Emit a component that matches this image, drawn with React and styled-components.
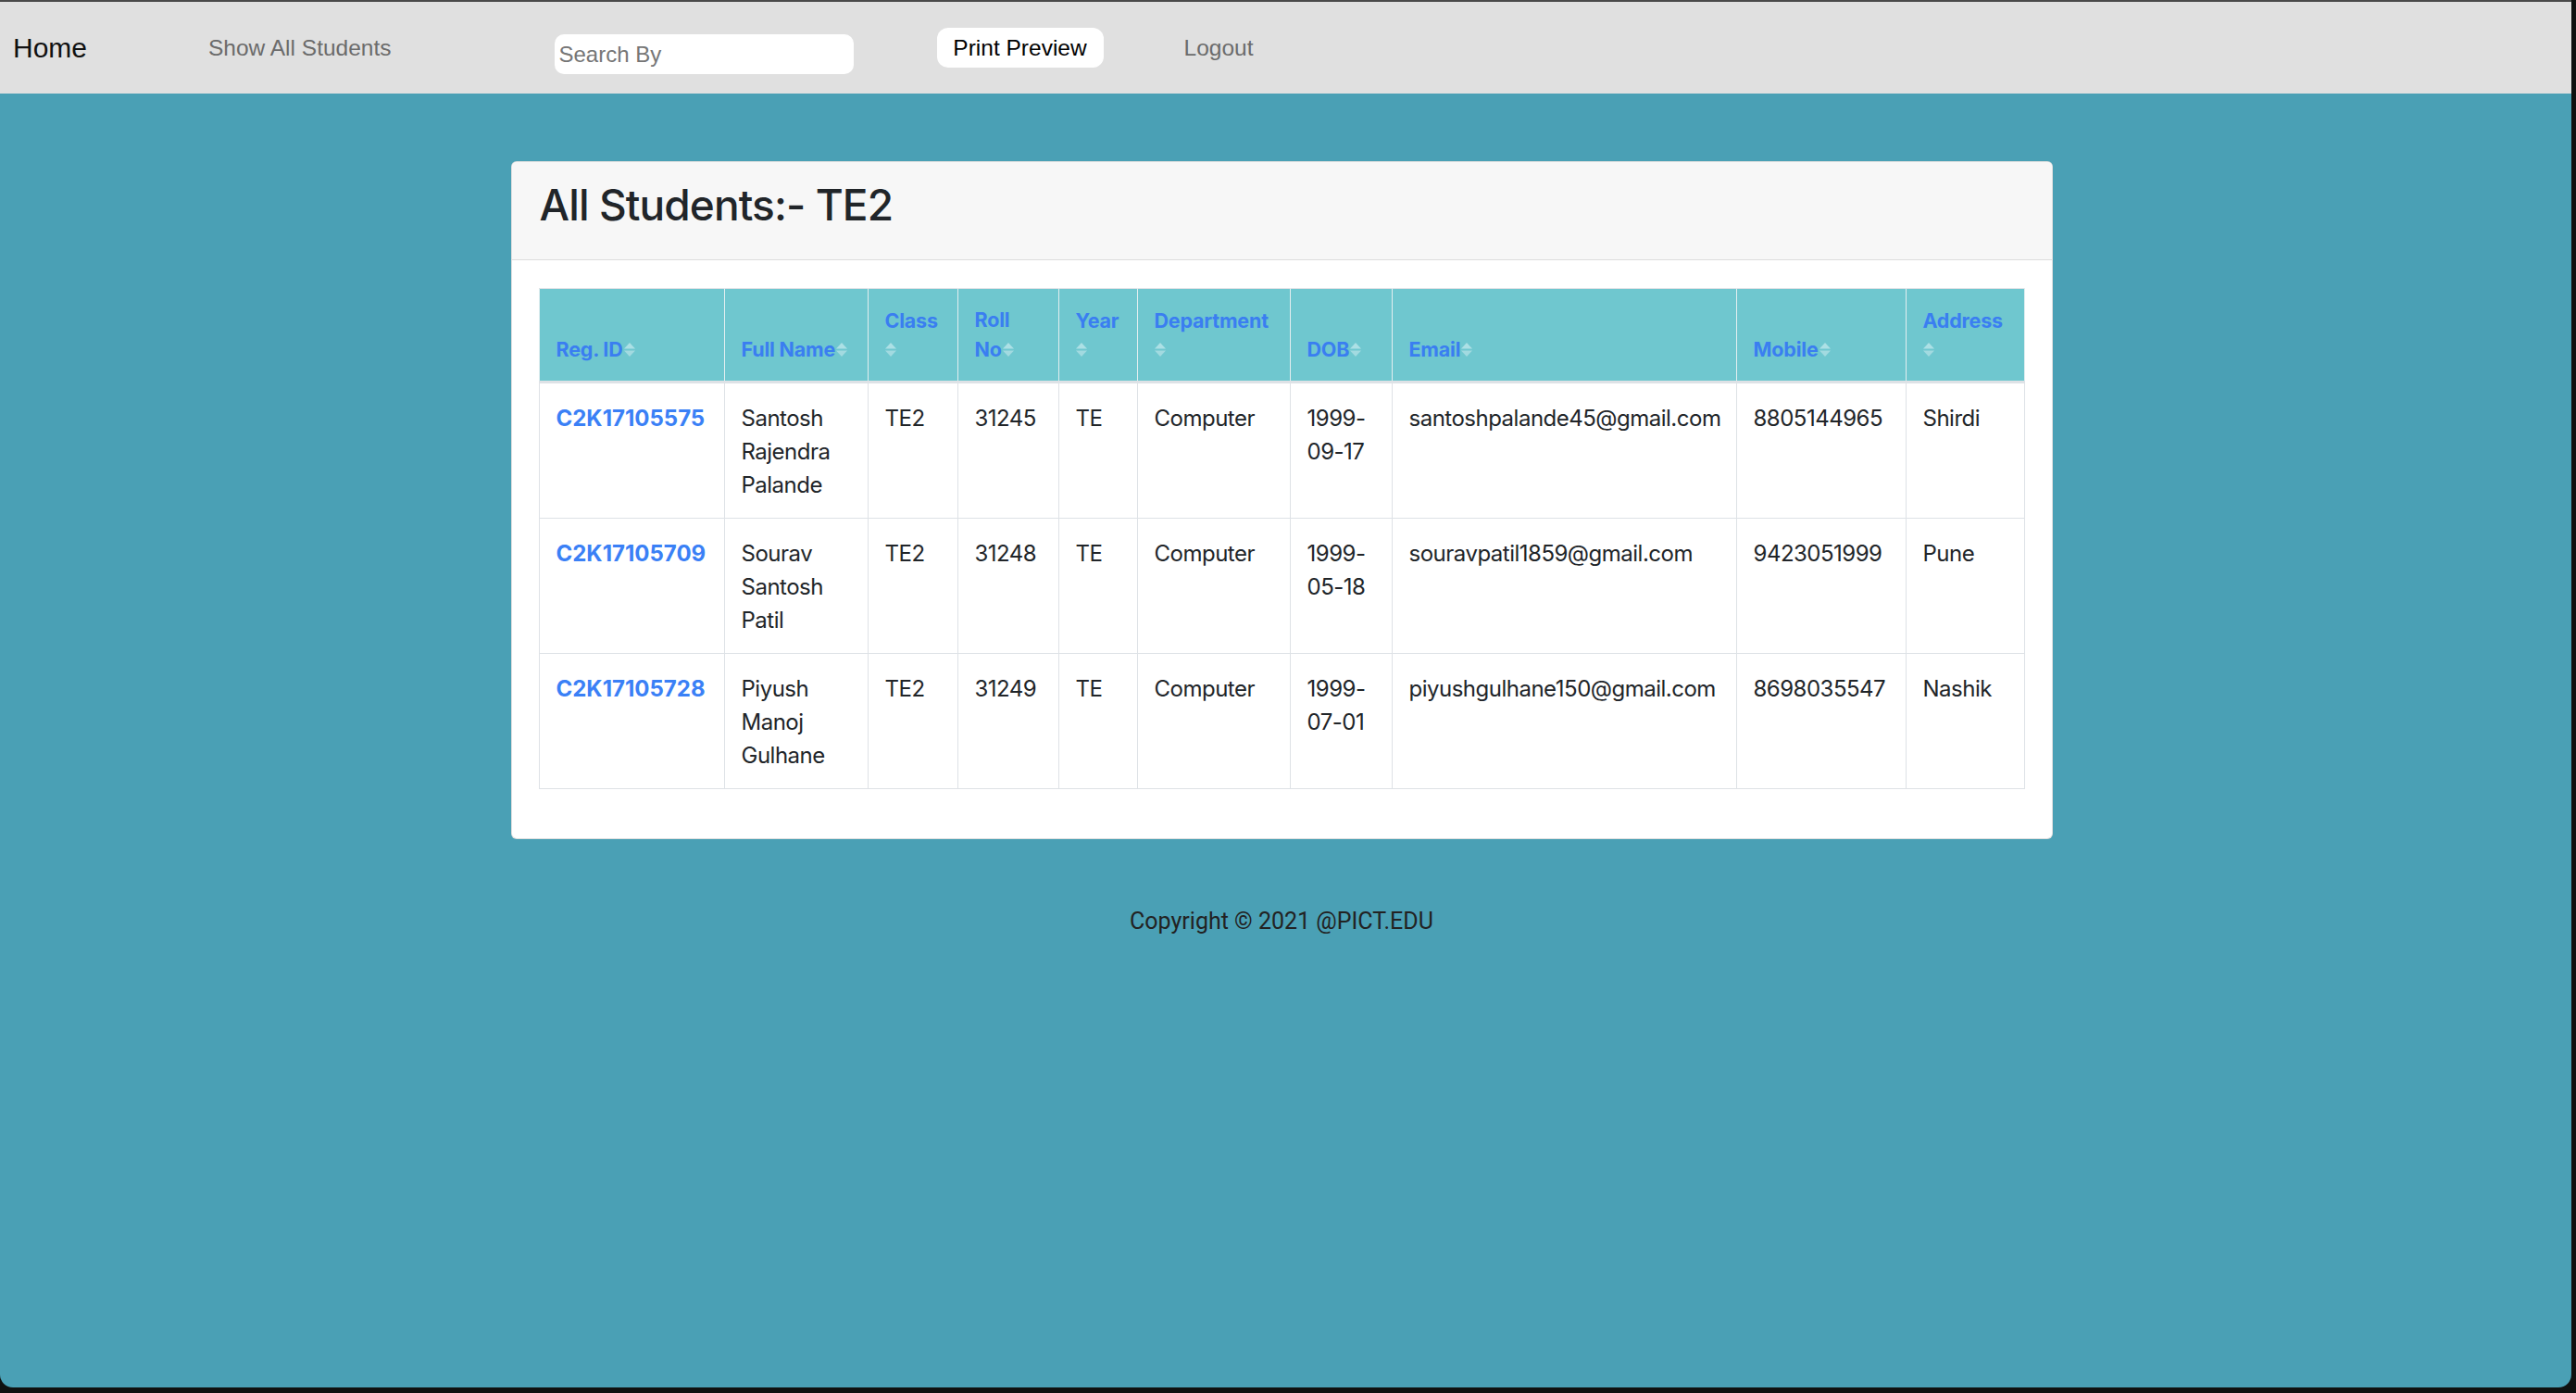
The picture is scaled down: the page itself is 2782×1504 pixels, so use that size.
import React from 'react';
import styled, { createGlobalStyle } from 'styled-components';

const GlobalStyle = createGlobalStyle`
  html, body {
    margin: 0;
    padding: 0;
    background: #0f1110;
  }
  * {
    box-sizing: border-box;
  }
`;

const Frame = styled.div`
  width: 2777px;
  height: 1498px;
  border-top: 2px solid #4a4a4a;
  border-bottom-left-radius: 14px;
  border-bottom-right-radius: 14px;
  background: #4aa0b5;
  overflow: hidden;
  display: flex;
  flex-direction: column;
`;

const NavBar = styled.nav`
  height: 99px;
  background: #e0e0e0;
  display: flex;
  align-items: center;
  padding-left: 14px;
  font-family: "Liberation Sans", Arial, sans-serif;
`;

const Brand = styled.a`
  font-size: 30px;
  color: #111;
  text-decoration: none;
`;

const NavLink = styled.a`
  font-size: 24.5px;
  color: #6b6b6b;
  text-decoration: none;
  margin-left: ${p => p.gap}px;
`;

const SearchInput = styled.input`
  margin-left: 176px;
  margin-top: 14px;
  width: 323px;
  height: 43px;
  border: none;
  border-radius: 10px;
  background: #fff;
  padding: 0 5px;
  font-family: "Liberation Sans", Arial, sans-serif;
  font-size: 24px;
  color: #222;
  outline: none;
  &::placeholder {
    color: #767676;
  }
`;

const PreviewButton = styled.button`
  margin-left: 90px;
  width: 180px;
  height: 43px;
  border: none;
  border-radius: 12px;
  background: #fff;
  font-family: "Liberation Sans", Arial, sans-serif;
  font-size: 24.5px;
  color: #000;
  padding: 0;
`;

const Main = styled.main`
  width: 2768px;
  padding-top: 73px;
  font-family: Inter, "Noto Sans", sans-serif;
  color: #212529;
`;

const Container = styled.div`
  width: 1665px;
  margin: 0 auto;
`;

const Card = styled.section`
  background: #fff;
  border: 1px solid rgba(0, 0, 0, 0.125);
  border-radius: 6px;
  overflow: hidden;
`;

const CardHeader = styled.header`
  background: #f7f7f7;
  border-bottom: 1px solid #dcdcdc;
  padding: 18px 30px;
`;

const Title = styled.h2`
  margin: 0 0 12px;
  font-size: 46px;
  font-weight: 500;
  line-height: 57px;
  letter-spacing: -0.9px;
  color: #212529;
`;

const CardBody = styled.div`
  padding: 30px 29px 53px;
`;

const Table = styled.table`
  width: 100%;
  border-collapse: collapse;
  table-layout: fixed;
  font-size: 24px;
  line-height: 36px;
  letter-spacing: -0.5px;
`;

const HeadCell = styled.th`
  background: #6fc7cf;
  color: #3a7ef1;
  font-size: 21.5px;
  font-weight: 700;
  line-height: 31.5px;
  letter-spacing: -0.2px;
  text-align: left;
  vertical-align: bottom;
  padding: 18px 17px 18px 18px;
  border: 1px solid #e3eef0;
  border-bottom: 3px solid #dee2e6;
  border-top-color: #dee2e6;
`;

const Cell = styled.td`
  padding: 20px 17px 17px 18px;
  vertical-align: top;
  border: 1px solid #dee2e6;
  font-weight: ${p => (p.link ? 700 : 400)};
  letter-spacing: ${p => (p.link ? '0' : '-0.5px')};
  color: ${p => (p.link ? '#3a80f6' : '#212529')};
`;

const Footer = styled.footer`
  text-align: center;
  font-family: Roboto, Inter, sans-serif;
  font-size: 25px;
  color: #222;
  margin-top: 74px;
`;

const Caret = styled.svg`
  display: ${p => (p.block ? 'block' : 'inline-block')};
  width: 12px;
  height: 15px;
  margin-left: ${p => (p.block ? 0 : 1)}px;
  margin-top: ${p => (p.block ? 8 : 0)}px;
  margin-bottom: ${p => (p.block ? 8 : 0)}px;
`;

const SortCaret = ({ block }) => (
  <Caret block={block} viewBox="0 0 12 15">
    <polygon points="6,0 12,6.5 0,6.5" fill="#ace0e5" />
    <polygon points="0,8.5 12,8.5 6,15" fill="#a2dae0" />
  </Caret>
);

const columns = [
  { label: 'Reg. ID', width: 200 },
  { label: 'Full Name', width: 155 },
  { label: 'Class', width: 97, block: true },
  { label: 'Roll No', width: 109 },
  { label: 'Year', width: 85, block: true },
  { label: 'Department', width: 165, block: true },
  { label: 'DOB', width: 110 },
  { label: 'Email', width: 372 },
  { label: 'Mobile', width: 183 },
  { label: 'Address', width: 128, block: true },
];

const students = [
  ['C2K17105575', 'Santosh Rajendra Palande', 'TE2', '31245', 'TE', 'Computer', '1999-09-17', 'santoshpalande45@gmail.com', '8805144965', 'Shirdi'],
  ['C2K17105709', 'Sourav Santosh Patil', 'TE2', '31248', 'TE', 'Computer', '1999-05-18', 'souravpatil1859@gmail.com', '9423051999', 'Pune'],
  ['C2K17105728', 'Piyush Manoj Gulhane', 'TE2', '31249', 'TE', 'Computer', '1999-07-01', 'piyushgulhane150@gmail.com', '8698035547', 'Nashik'],
];

function App() {
  return (
    <>
      <GlobalStyle />
      <Frame>
        <NavBar>
          <Brand href="#">Home</Brand>
          <NavLink href="#" gap={131}>Show All Students</NavLink>
          <SearchInput placeholder="Search By" />
          <PreviewButton>Print Preview</PreviewButton>
          <NavLink href="#" gap={87}>Logout</NavLink>
        </NavBar>
        <Main>
          <Container>
            <Card>
              <CardHeader>
                <Title>All Students:- TE2</Title>
              </CardHeader>
              <CardBody>
                <Table>
                  <colgroup>
                    {columns.map(c => (
                      <col key={c.label} style={{ width: c.width }} />
                    ))}
                  </colgroup>
                  <thead>
                    <tr>
                      {columns.map(c => (
                        <HeadCell key={c.label}>
                          {c.label === 'Roll No' ? (
                            <>Roll<br />No<SortCaret /></>
                          ) : (
                            <>{c.label}<SortCaret block={c.block} /></>
                          )}
                        </HeadCell>
                      ))}
                    </tr>
                  </thead>
                  <tbody>
                    {students.map(row => (
                      <tr key={row[0]}>
                        {row.map((v, i) => (
                          <Cell key={i} link={i === 0}>{v}</Cell>
                        ))}
                      </tr>
                    ))}
                  </tbody>
                </Table>
              </CardBody>
            </Card>
          </Container>
          <Footer>Copyright © 2021 @PICT.EDU</Footer>
        </Main>
      </Frame>
    </>
  );
}

export default App;
